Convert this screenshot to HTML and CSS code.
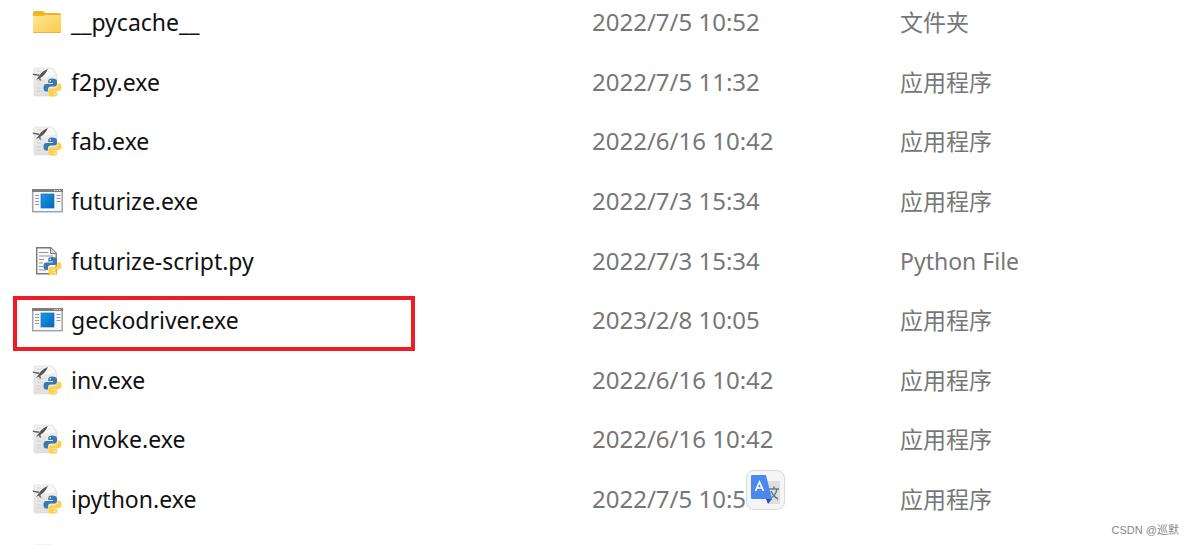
FILE: index.html
```
<!DOCTYPE html>
<html lang="zh-CN">
<head>
<meta charset="utf-8">
<meta name="viewport" content="width=device-width, initial-scale=1">
<title>Scripts</title>
<link rel="stylesheet" href="styles.css">
</head>
<body>
<svg class="defs" aria-hidden="true">
  <defs>
    <linearGradient id="g-folder" x1="0" y1="0" x2="1" y2="1"><stop offset="0" stop-color="#ffe69a"/><stop offset="1" stop-color="#fccb48"/></linearGradient>
    <linearGradient id="g-app" x1="0" y1="0" x2="1" y2="1"><stop offset="0" stop-color="#1b9be6"/><stop offset="1" stop-color="#0565bd"/></linearGradient>
    <linearGradient id="g-sheet" x1="0" y1="0" x2="0" y2="1"><stop offset="0" stop-color="#f3f3f3"/><stop offset="1" stop-color="#e0e0e0"/></linearGradient>
    <symbol id="snakes" viewBox="0 0 20 20">
      <path fill="#3b78ab" d="M9.500 .5C6.500 .5 5.500 1.500 5.500 3.500v1.800h5v1H3.500C1.300 6.300 .5 8 .5 10.300c0 2.400 1 3.900 3 3.900h1.700v-2.200c0-1.800 1.300-3 3-3h4c1.500 0 2.500-1.100 2.500-2.600V3.500c0-2-1.900-3-5.200-3z"/>
      <circle cx="7.600" cy="3" r=".9" fill="#dceaf5"/>
      <path fill="#ffd246" d="M10.500 19.600c3 0 4-1 4-3v-1.800h-5v-1h7c2.200 0 3-1.700 3-4 0-2.400-1-3.900-3-3.900h-1.200V8c0 1.800-1.300 3-3 3h-4c-1.500 0-2.500 1.100-2.500 2.600v3c0 2 1.400 3 4.700 3z"/>
      <circle cx="12.300" cy="17.100" r=".9" fill="#fff6cf"/>
    </symbol>
    <symbol id="i-folder" viewBox="0 0 32 32">
      <path fill="#f2b21c" d="M2 7q0-2 2-2h7q1 0 2 1l1 1h14q2 0 2 2v4H2z"/>
      <rect x="2" y="9" width="28" height="18" rx="1" fill="url(#g-folder)"/>
      <path fill="#f5b91f" d="M2 8h11l2-1v1l-2 2H2z"/>
      <path stroke="#e5b44b" d="M2.500 26.500h27"/>
    </symbol>
    <symbol id="i-pyexe" viewBox="0 0 32 32">
      <path fill="url(#g-sheet)" stroke="#d8d8d8" stroke-width=".6" d="M3 3q0-1 1-1h17q4 3 5 8v20H4q-1 0-1-1z"/>
      <path stroke="#cacaca" stroke-width=".8" stroke-dasharray="4 1.500 2 1" d="M6 5h4M17 6h5M6 15h8M6 18h6M6 22h6M6 25h8"/>
      <path fill="#fff" opacity=".7" d="M14 3h6q3 2 4 6-6 2-11 1z"/>
      <path fill="#555" d="M17 3C12 5 10 7 8 10l-3 4 4-2C13 10 15 7 17 3z"/>
      <path fill="#666" d="M1.500 7.500l7 1-1 1.500-5.500-1zM9 11l1.500 4-2-1-1-2z"/>
      <use href="#snakes" x="12" y="12" width="19" height="19"/>
    </symbol>
    <symbol id="i-app" viewBox="0 0 32 32">
      <rect x="1.700" y="5" width="29.500" height="21.700" fill="#fafafa" stroke="#a2a2a2" stroke-width="1.500"/>
      <path fill="#7d7d79" d="M1 4h31v3H1z"/>
      <path stroke="#eee" stroke-dasharray="1.500 1" d="M23 5.500h7"/>
      <path stroke="#999" d="M4 10.500h4M4 13.500h4M4 16.500h4M4 19.500h4M25.500 10.500h4M25.500 13.500h4M25.500 16.500h4"/>
      <rect x="10" y="9" width="13" height="14" fill="url(#g-app)" stroke="#0a71c7" stroke-width=".7"/>
    </symbol>
    <symbol id="i-pyfile" viewBox="0 0 32 32">
      <path fill="#fafafa" stroke="#777" stroke-width="1.400" d="M5.700 2.700h14l5.500 5.500v20.600H5.700z"/>
      <path fill="#ddd" stroke="#777" d="M19.500 2.700v5.800h5.800"/>
      <path stroke="#969696" stroke-width="1.200" d="M8 7.500h9M8 11h14M8 14.500h5M8 18h4M8 21.500h4M8 25h7"/>
      <use href="#snakes" x="12" y="11" width="19" height="20"/>
    </symbol>
  </defs>
</svg>
<main class="listing">
  <table class="files">
    <colgroup><col class="col-name"><col class="col-date"><col></colgroup>
    <tbody>
      <tr><td><div class="name"><svg class="icon"><use href="#i-folder"/></svg>__pycache__</div></td><td>2022/7/5 10:52</td><td class="kind">文件夹</td></tr>
      <tr><td><div class="name"><svg class="icon"><use href="#i-pyexe"/></svg>f2py.exe</div></td><td>2022/7/5 11:32</td><td class="kind">应用程序</td></tr>
      <tr><td><div class="name"><svg class="icon"><use href="#i-pyexe"/></svg>fab.exe</div></td><td>2022/6/16 10:42</td><td class="kind">应用程序</td></tr>
      <tr><td><div class="name"><svg class="icon"><use href="#i-app"/></svg>futurize.exe</div></td><td>2022/7/3 15:34</td><td class="kind">应用程序</td></tr>
      <tr><td><div class="name"><svg class="icon"><use href="#i-pyfile"/></svg>futurize-script.py</div></td><td>2022/7/3 15:34</td><td class="kind">Python File</td></tr>
      <tr><td class="marked"><div class="name"><svg class="icon"><use href="#i-app"/></svg>geckodriver.exe</div></td><td>2023/2/8 10:05</td><td class="kind">应用程序</td></tr>
      <tr><td><div class="name"><svg class="icon"><use href="#i-pyexe"/></svg>inv.exe</div></td><td>2022/6/16 10:42</td><td class="kind">应用程序</td></tr>
      <tr><td><div class="name"><svg class="icon"><use href="#i-pyexe"/></svg>invoke.exe</div></td><td>2022/6/16 10:42</td><td class="kind">应用程序</td></tr>
      <tr><td><div class="name"><svg class="icon"><use href="#i-pyexe"/></svg>ipython.exe</div></td>
        <td class="has-popup">2022/7/5 10:5<button class="translate" type="button" aria-label="翻译">
          <svg class="translate-icon" viewBox="0 0 30 30" aria-hidden="true">
            <path fill="#dedede" d="M11 6h17q1 0 1 1v21q0 1-1 1H18z"/>
            <path fill="none" stroke="#607d80" stroke-width="1.500" d="M18 14h10M23 11.500V14M26 14q-1 6-7 10M20 16q2 5 7 8"/>
            <path fill="#3547a8" d="M15 24h6l-4 5z"/>
            <path fill="#4a87ee" d="M1 0h14l6 24H1q-1 0-1-1V1q0-1 1-1z"/>
            <path fill="none" stroke="#fff" stroke-width="1.700" d="M4.500 16L8.500 7l4 9M6 13h5"/>
          </svg>
        </button></td><td class="kind">应用程序</td></tr>
      <tr><td><div class="name"><svg class="icon"><use href="#i-pyexe"/></svg></div></td><td></td><td></td></tr>
    </tbody>
  </table>
  <p class="watermark">CSDN @巡默</p>
</main>
</body>
</html>
```
FILE: styles.css
```
* { box-sizing: border-box; }

body {
  margin: 0;
  background: #fff;
  font-family: "Noto Sans", "Noto Sans CJK SC", sans-serif;
  font-size: 24px;
  line-height: 32px;
}

.defs {
  position: absolute;
  width: 0;
  height: 0;
}

.listing {
  position: relative;
  height: 100vh;
  overflow: hidden;
}

/* The list is scrolled slightly past its first row. */
.files {
  width: 100%;
  margin-top: -8px;
  border-collapse: collapse;
  table-layout: fixed;
  color: #777;
}

.col-name { width: 592px; }
.col-date { width: 308px; }

.files tr { height: 60px; }
.files tr:nth-child(5n+2),
.files tr:nth-child(5n) { height: 59px; }

.files td {
  padding: 0;
  white-space: nowrap;
}

.files .kind { font-size: 23px; }

.name {
  display: flex;
  align-items: center;
  gap: 8px;
  padding-left: 31px;
  color: #111;
  font-size: 23px;
}

.icon {
  flex: none;
  width: 32px;
  height: 32px;
}

.marked,
.has-popup { position: relative; }

.marked::after {
  content: "";
  position: absolute;
  top: 6px;
  left: 13px;
  box-sizing: border-box;
  width: 402px;
  height: 55px;
  border: 4px solid #ee1c25;
}

.translate {
  position: absolute;
  top: 1px;
  left: 154px;
  display: grid;
  place-items: center;
  width: 39px;
  height: 40px;
  padding: 0;
  border: 1px solid #dadada;
  border-radius: 8px;
  background: #f5f5f5;
}

.translate-icon {
  width: 30px;
  height: 30px;
}

.watermark {
  position: absolute;
  right: 15px;
  bottom: 6px;
  margin: 0;
  color: #888;
  font-family: "Liberation Sans", "Noto Sans CJK SC", sans-serif;
  font-size: 11px;
  line-height: 18px;
}
```
